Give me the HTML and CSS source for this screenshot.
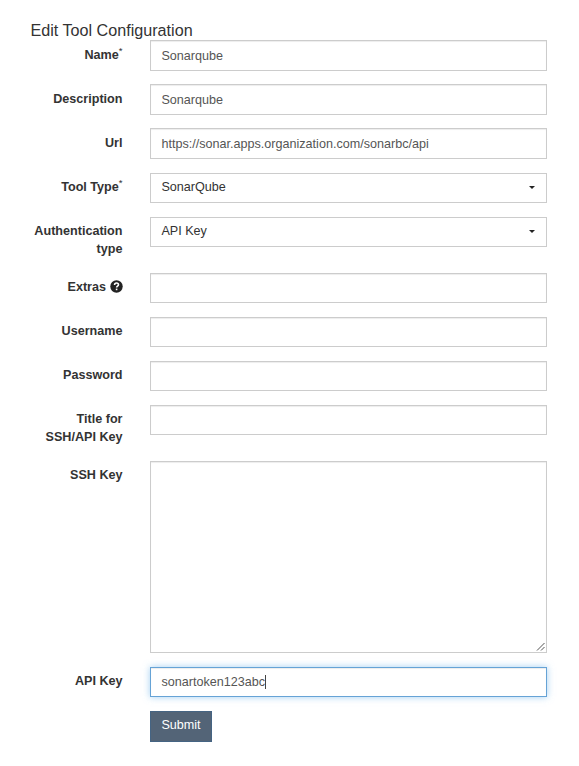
FILE: index.html
```
<!DOCTYPE html>
<html lang="en">
<head>
<meta charset="utf-8">
<title>Edit Tool Configuration</title>
<link rel="stylesheet" href="styles.css">
</head>
<body>
<main>
<h1>Edit Tool Configuration</h1>
<form>
<div class="row"><label class="name">Name<sup>*</sup></label><div class="control">Sonarqube</div></div>
<div class="row"><label class="name">Description</label><div class="control">Sonarqube</div></div>
<div class="row"><label class="name">Url</label><div class="control">https://sonar.apps.organization.com/sonarbc/api</div></div>
<div class="row"><label class="name">Tool Type<sup>*</sup></label><div class="control select"><span>SonarQube</span><i class="caret"></i></div></div>
<div class="row"><label class="name">Authentication type</label><div class="control select"><span>API Key</span><i class="caret"></i></div></div>
<div class="row"><label class="name">Extras <svg class="help" viewBox="0 0 13 13"><circle cx="6.5" cy="6.5" r="6.2" fill="#222"/><path d="M4.6 5.1V4.7C4.6 3.5 5.4 3 6.5 3s2 .6 2 1.7c0 1.5-1.9 1.4-1.9 2.8" fill="none" stroke="#fff" stroke-width="1.6"/><path d="M5.8 8.6h1.6v1.6H5.8z" fill="#fff"/></svg></label><div class="control"></div></div>
<div class="row"><label class="name">Username</label><div class="control"></div></div>
<div class="row"><label class="name">Password</label><div class="control"></div></div>
<div class="row"><label class="name">Title for SSH/API Key</label><div class="control"></div></div>
<div class="row"><label class="name">SSH Key</label><div class="control area"><svg class="grip" viewBox="0 0 9 9"><path d="M1 8.5L8.5 1M5 8.5L8.5 5" fill="none" stroke="#555" stroke-width="1"/></svg></div></div>
<div class="row"><label class="name">API Key</label><div class="control focus"><span>sonartoken123abc</span><i class="cursor"></i></div></div>
<div class="row"><span class="name"></span><button type="button">Submit</button></div>
</form>
</main>
</body>
</html>
```
FILE: styles.css
```
* { box-sizing: border-box; }
body {
  margin: 0;
  background: #fff;
  color: #333;
  font: 12.6px/18px "Liberation Sans", Arial, sans-serif;
}
main { padding: 21px 32px 0 30.5px; }
h1 {
  margin: 0;
  font-size: 16.15px;
  font-weight: 400;
  line-height: 19.3px;
}
.row {
  display: flex;
  align-items: flex-start;
  margin-bottom: 13.5px;
}
.name {
  flex: none;
  width: 92px;
  margin-right: 27.5px;
  padding: 5.3px 0 1.15px;
  font-weight: 700;
  text-align: right;
}
sup {
  position: relative;
  top: -5px;
  font-size: 9.5px;
  font-weight: 400;
  line-height: 0;
  vertical-align: baseline;
}
.help {
  width: 13px;
  height: 13px;
  vertical-align: -2px;
}
.control {
  display: flex;
  flex: 1;
  height: 30.6px;
  padding: 5.6px 11px 5.6px 10.4px;
  border: 1px solid #ccc;
  box-shadow: inset 0 1px 1px rgba(0, 0, 0, .075);
  color: #555;
}
.select {
  justify-content: space-between;
  padding-top: 4.1px;
  box-shadow: none;
  color: #333;
}
.caret {
  margin-top: 8px;
  width: 0;
  height: 0;
  border: 3.5px solid transparent;
  border-top-color: #222;
  border-bottom: 0;
}
.area {
  height: 192.5px;
  padding: 0;
  align-items: flex-end;
  justify-content: flex-end;
}
.grip {
  width: 9px;
  height: 9px;
  margin: 0 1px 1px 0;
}
.focus {
  border-color: #66a3d6;
  box-shadow: inset 0 1px 1px rgba(0, 0, 0, .075), 0 0 7px rgba(102, 175, 233, .6);
}
.cursor {
  width: 1px;
  height: 14px;
  margin: 2px 0 0 -.5px;
  background: #444;
}
button {
  width: 62px;
  height: 31px;
  margin: 0;
  padding: 0 0 2px;
  border: 1px solid #456483;
  background: #536477;
  color: #fff;
  font: inherit;
}
```
